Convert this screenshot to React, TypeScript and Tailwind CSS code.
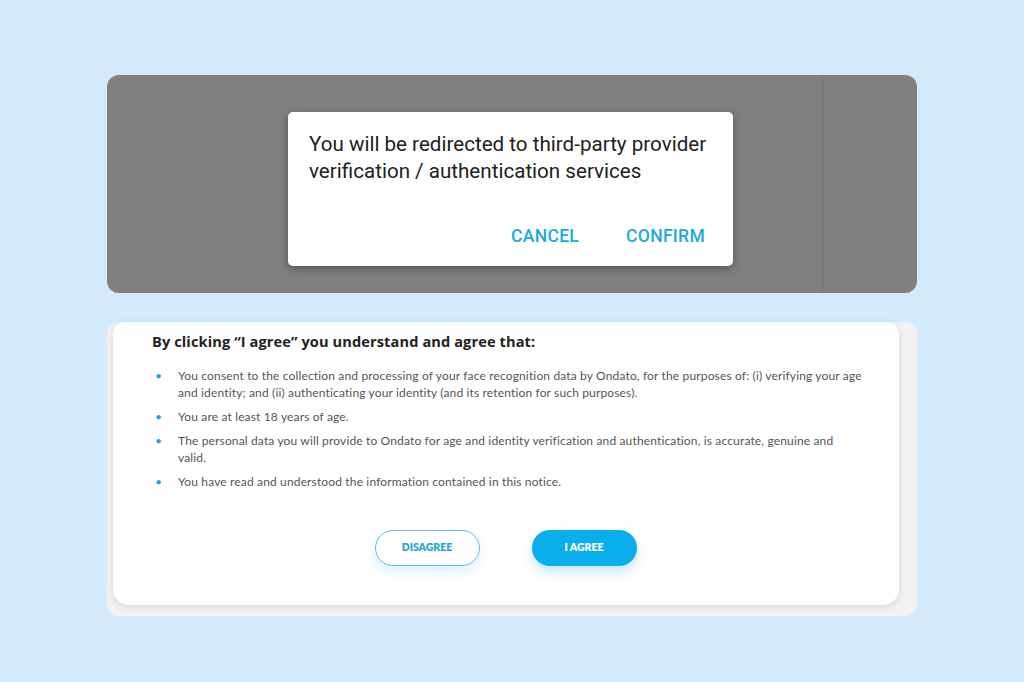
export default function App() {
  const items = [
    'You consent to the collection and processing of your face recognition data by Ondato, for the purposes of: (i) verifying your age and identity; and (ii) authenticating your identity (and its retention for such purposes).',
    'You are at least 18 years of age.',
    'The personal data you will provide to Ondato for age and identity verification and authentication, is accurate, genuine and valid.',
    'You have read and understood the information contained in this notice.',
  ];

  return (
    <div className="w-[1024px] h-[682px] bg-[#d5ebfb] flex flex-col items-center pt-[75px] overflow-hidden">
      {/* redirect dialog over dimmed screen */}
      <div className="w-[810px] h-[218px] bg-[#808080] rounded-[12px] flex relative">
        <div className="flex-1 flex justify-center pt-[37px] pl-[92px]">
          <div
            className="w-[445px] h-[154px] bg-white rounded-[5px] shadow-[0_3px_8px_rgba(0,0,0,0.35)] pl-[21px] pr-[16px] pt-[19px] flex flex-col"
            style={{ fontFamily: 'Roboto, sans-serif' }}
          >
            <p className="text-[20.6px] leading-[27px] text-[#212121]">
              You will be redirected to third-party provider verification / authentication services
            </p>
            <div className="mt-auto mb-[17px] flex justify-end gap-[47px] pr-[12px]">
              <span className="text-[17.5px] font-medium tracking-[0.3px] text-[#20a9dc]">CANCEL</span>
              <span className="text-[17.5px] font-medium tracking-[0.3px] text-[#20a9dc]">CONFIRM</span>
            </div>
          </div>
        </div>
        <div className="w-[95px] border-l border-[#737373]" />
      </div>

      {/* consent card */}
      <div className="mt-[29px] w-[810px] h-[294px] bg-[#f3f3f3] rounded-[12px] pl-[6px] pr-[18px] pb-[11px]">
        <div
          className="h-full bg-white rounded-b-[16px] rounded-t-[12px] shadow-[0_2px_8px_rgba(0,0,0,0.12)] pl-[39px] pt-[9px]"
          style={{ fontFamily: 'Lato, sans-serif' }}
        >
          <h2
            className="text-[14.6px] font-bold text-[#222] tracking-[0.1px]"
            style={{ fontFamily: '"Open Sans", sans-serif' }}
          >
            By clicking “I agree” you understand and agree that:
          </h2>
          <ul className="mt-[14px] flex flex-col gap-[7px] pr-[36px]">
            {items.map(t => (
              <li key={t} className="flex text-[12px] leading-[17px] text-[#555]">
                <span className="w-[26px] shrink-0 pl-[3px] text-[#1aa6d6]">•</span>
                <span className="tracking-[0.15px]">{t}</span>
              </li>
            ))}
          </ul>
          <div className="mt-[40px] flex justify-center gap-[52px] pr-[40px]">
            <button className="w-[105px] h-[36px] rounded-full border border-[#5bbfe0] bg-white text-[10.5px] font-extrabold text-[#1fa6d6] shadow-[0_6px_12px_rgba(23,160,230,0.15)]" style={{ fontFamily: 'Lato, sans-serif' }}>
              DISAGREE
            </button>
            <button className="w-[105px] h-[36px] rounded-full bg-[#0aaeeb] text-[10.5px] font-extrabold text-white shadow-[0_6px_12px_rgba(23,160,230,0.25)]" style={{ fontFamily: 'Lato, sans-serif' }}>
              I AGREE
            </button>
          </div>
        </div>
      </div>
    </div>
  );
}
